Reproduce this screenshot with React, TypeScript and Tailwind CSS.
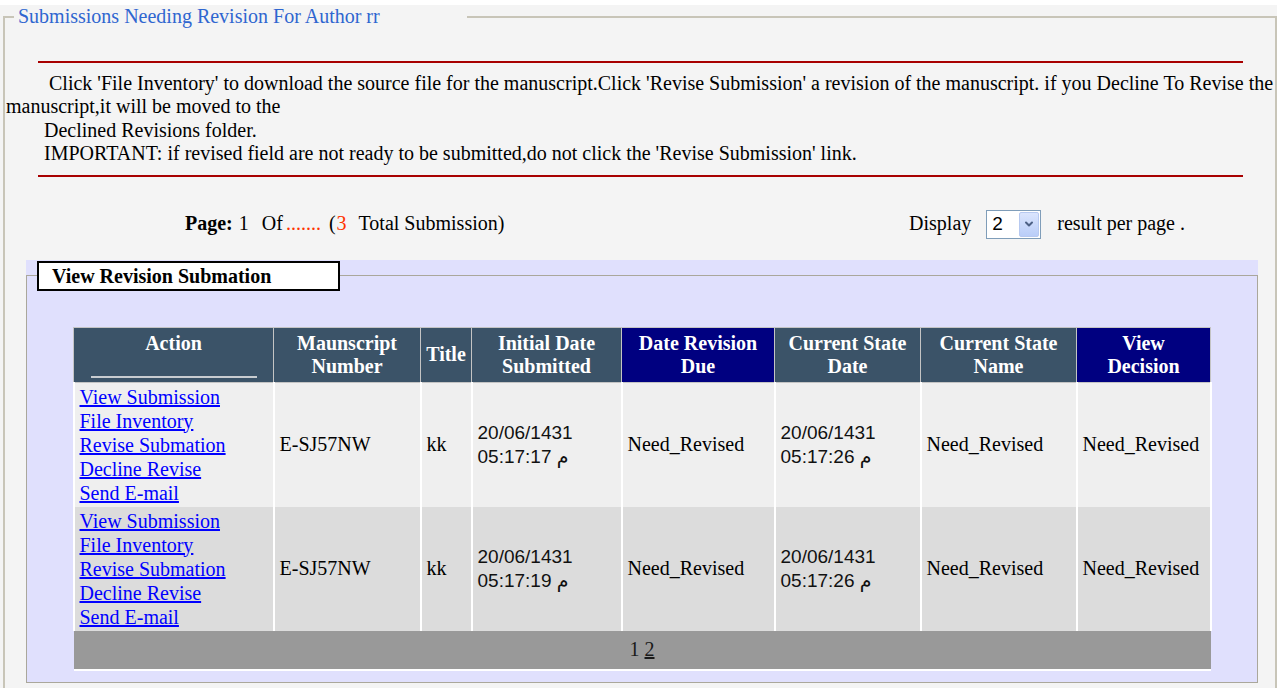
import { ChevronDown } from "lucide-react";

const links = [
  "View Submission",
  "File Inventory",
  "Revise Submation",
  "Decline Revise",
  "Send E-mail",
];

const rows = [
  { number: "E-SJ57NW", title: "kk", submitted: "05:17:17", stateDate: "05:17:26" },
  { number: "E-SJ57NW", title: "kk", submitted: "05:17:19", stateDate: "05:17:26" },
];

function DateCell({ time }: { time: string }) {
  return (
    <td className="border-x-2 border-white px-[5px] align-middle font-['Liberation_Sans','DejaVu_Sans',Arial,sans-serif] text-[19px] leading-[24px] text-[#111]">
      20/06/1431
      <br />
      {time} م
    </td>
  );
}

function TextCell({ children }: { children: React.ReactNode }) {
  return (
    <td className="border-x-2 border-white px-[5px] align-middle whitespace-nowrap">
      {children}
    </td>
  );
}

export default function App() {
  return (
    <div className="min-h-screen bg-white pt-[5px] font-['Liberation_Serif','Times_New_Roman',serif] text-[20px] leading-[23.5px] text-black">
      <div className="mr-[5px] bg-[#f4f4f4] pb-[40px]">
        <fieldset className="ml-[3px] border-2 border-[#c8c5b8] pb-[40px]">
          <legend className="ml-[9px] w-[453px] pl-[4px] text-[#2f66d0]">
            Submissions Needing Revision For Author rr
          </legend>

          <div className="mt-[32px] ml-[33px] mr-[32px] border-t-2 border-[#a80000]" />

          <div className="mt-[9px] whitespace-nowrap">
            <div className="pl-[44px]">
              Click 'File Inventory' to download the source file for the manuscript.Click 'Revise
              Submission' a revision of the manuscript. if you Decline To Revise the
            </div>
            <div className="pl-[1px]">manuscript,it will be moved to the</div>
            <div className="pl-[39px]">Declined Revisions folder.</div>
            <div className="pl-[39px]">
              IMPORTANT: if revised field are not ready to be submitted,do not click the 'Revise
              Submission' link.
            </div>
          </div>

          <div className="mt-[9px] ml-[33px] mr-[32px] border-t-2 border-[#a80000]" />

          <div className="mt-[33px] flex h-[29px] items-center">
            <div className="ml-[180px] flex items-center whitespace-nowrap">
              <span className="font-bold">Page:</span>
              <span className="ml-[6px]">1</span>
              <span className="ml-[13px]">Of</span>
              <span className="ml-[3px] text-[#ff3300]">.......</span>
              <span className="ml-[8px]">(</span>
              <span className="ml-[1px] text-[#ff3300]">3</span>
              <span className="ml-[12px]">Total Submission)</span>
            </div>
            <div className="ml-auto mr-[90px] flex items-center whitespace-nowrap">
              <span>Display</span>
              <div className="ml-[15px] flex h-[29px] w-[55px] items-center border border-[#7f9db9] bg-white">
                <span className="ml-[5px] font-['Liberation_Sans',Arial,sans-serif] text-[19px]">2</span>
                <div className="ml-auto mr-[1px] flex h-[25px] w-[20px] items-center justify-center rounded-[2px] border border-[#b7c9f0] bg-gradient-to-b from-[#dbe5fd] to-[#b9cdf8]">
                  <ChevronDown className="size-[12px] text-[#4d6185]" strokeWidth={4} />
                </div>
              </div>
              <span className="ml-[16px]">result per page .</span>
            </div>
          </div>

          <div className="mt-[21px] ml-[21px] mr-[17px] bg-[#e0e0fd] pt-[1px]">
            <fieldset className="border border-[#aaa79b] pb-[11px]">
              <legend className="ml-[10px] h-[30px] w-[303px] border-2 border-black bg-white pl-[13px] font-bold leading-[26px]">
                View Revision Submation
              </legend>

              <table className="mx-auto mt-[36px] w-[1137px] table-fixed border-collapse">
                <thead>
                  <tr className="h-[55px] text-white font-bold text-center leading-[23px]">
                    <th className="w-[200px] border border-[#c4c4c4] bg-[#3b5368] py-[4px] align-middle">
                      Action
                      <div className="mx-auto h-[23px] w-[166px] border-b-2 border-[#c8ccd0]" />
                    </th>
                    <th className="w-[147px] border border-[#c4c4c4] bg-[#3b5368] align-middle">
                      Maunscript
                      <br />
                      Number
                    </th>
                    <th className="w-[51px] border border-[#c4c4c4] bg-[#3b5368] align-middle">Title</th>
                    <th className="w-[150px] border border-[#c4c4c4] bg-[#3b5368] align-middle">
                      Initial Date
                      <br />
                      Submitted
                    </th>
                    <th className="w-[153px] border border-[#c4c4c4] bg-[#000080] align-middle">
                      Date Revision
                      <br />
                      Due
                    </th>
                    <th className="w-[146px] border border-[#c4c4c4] bg-[#3b5368] align-middle">
                      Current State
                      <br />
                      Date
                    </th>
                    <th className="w-[156px] border border-[#c4c4c4] bg-[#3b5368] align-middle">
                      Current State
                      <br />
                      Name
                    </th>
                    <th className="w-[134px] border border-[#c4c4c4] bg-[#000080] align-middle">
                      View
                      <br />
                      Decision
                    </th>
                  </tr>
                </thead>
                <tbody>
                  {rows.map((row, i) => (
                    <tr key={i} className={i === 0 ? "bg-[#efefef]" : "bg-[#dcdcdc]"}>
                      <td className="border-x-2 border-white px-[5px] py-[2px] leading-[24px]">
                        {links.map((l) => (
                          <div key={l} className="h-[24px]">
                            <a href="#" className="text-[#0000ff] underline">
                              {l}
                            </a>
                          </div>
                        ))}
                      </td>
                      <TextCell>{row.number}</TextCell>
                      <TextCell>{row.title}</TextCell>
                      <DateCell time={row.submitted} />
                      <TextCell>Need_Revised</TextCell>
                      <DateCell time={row.stateDate} />
                      <TextCell>Need_Revised</TextCell>
                      <TextCell>Need_Revised</TextCell>
                    </tr>
                  ))}
                  <tr className="h-[39px] bg-[#999999]">
                    <td colSpan={8} className="border-b-2 border-white text-center text-[#1a1a1a]">
                      1 <span className="underline">2</span>
                    </td>
                  </tr>
                </tbody>
              </table>
            </fieldset>
          </div>
        </fieldset>
      </div>
    </div>
  );
}
